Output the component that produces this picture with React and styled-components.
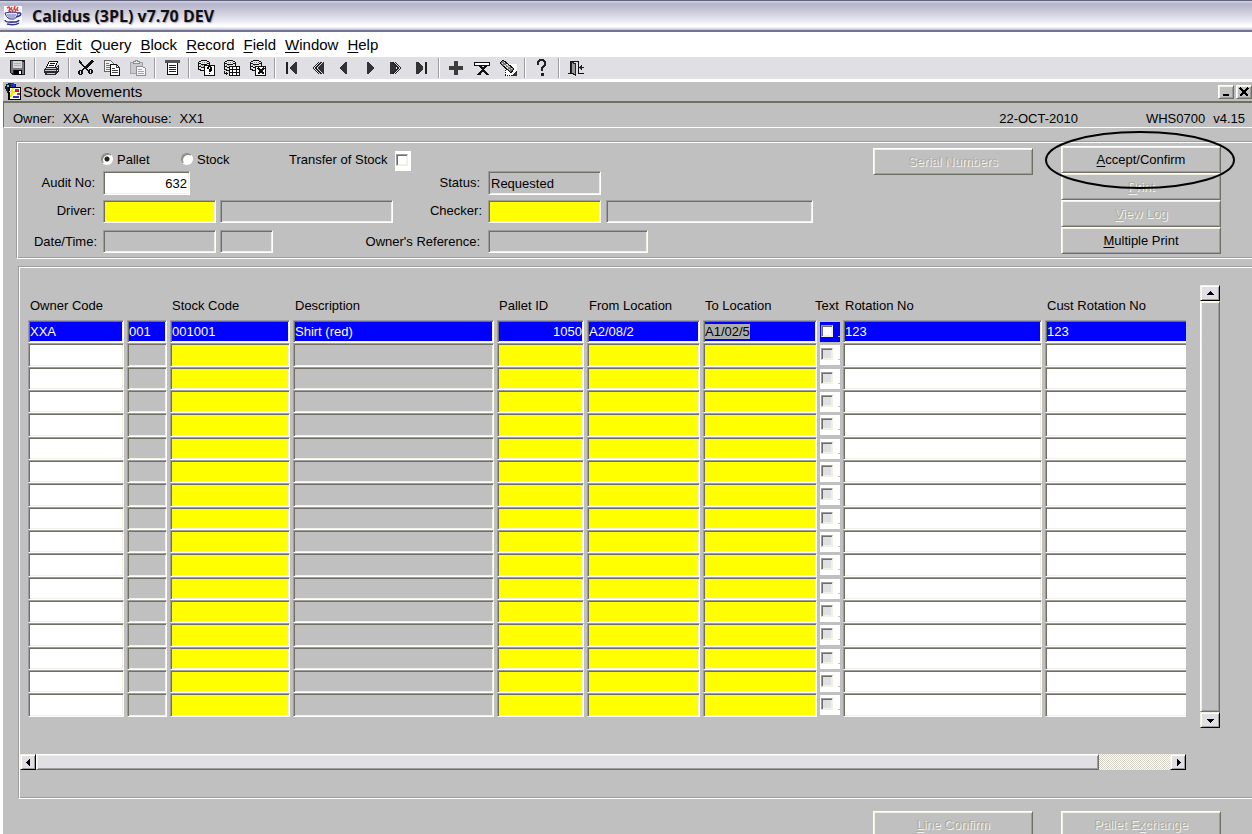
import React, { useEffect, useRef } from 'react';
import styled, { createGlobalStyle, css } from 'styled-components';

const GlobalStyle = createGlobalStyle`
  * {
    box-sizing: border-box;
  }
  body {
    margin: 0;
    background: #fff;
    color: #000;
    font-family: 'Liberation Sans', Arial, sans-serif;
    font-size: 13px;
    line-height: 16px;
  }
  button, input {
    font: inherit;
    color: inherit;
    margin: 0;
    border-radius: 0;
  }
`;

const raised = css`
  border: 1px solid;
  border-color: #fff #6f6f63 #6f6f63 #fff;
  box-shadow: inset 1px 1px #f1f0e3, inset -1px -1px #9d9da1;
`;

const sunken = css`
  border: 1px solid;
  border-color: #9d9da1 #fff #fff #9d9da1;
  box-shadow: inset 1px 1px #6f6f63, inset -1px -1px #f1f0e3;
`;

const App = styled.div`
  height: 100vh;
  overflow: hidden;
  display: flex;
  flex-direction: column;
`;

const TitleBar = styled.header`
  height: 32px;
  flex: none;
  display: flex;
  align-items: center;
  gap: 10px;
  padding: 0 4px;
  border-top: 1px solid #62627c;
  border-bottom: 2px solid #73738f;
  background: linear-gradient(
    #d5d5e4 0,
    #b4b4ca 3px,
    #c6c6d7 9px,
    #e9e9f1 20px,
    #fcfcff 24px,
    #ffffff 26px,
    #cfcfdf 28px,
    #c0c0d3 29px
  );

  h1 {
    margin: 0;
    font: 700 16px/20px 'Open Sans', 'Noto Sans', sans-serif;
    color: #101010;
    text-shadow: 1px 1px 1px #a9a9bd;
  }
`;

const MenuBar = styled.nav`
  height: 25px;
  flex: none;
  display: flex;
  align-items: center;
  gap: 9px;
  padding: 1px 5px 0;
  font-size: 15px;
  line-height: 20px;

  a {
    color: inherit;
    text-decoration: none;
  }
`;

const ToolBar = styled.div`
  height: 22px;
  flex: none;
  display: flex;
  align-items: center;
  padding-left: 5px;
  background: #e0dfe3;
`;

const ToolButton = styled.button`
  width: 26px;
  height: 22px;
  padding: 0;
  border: 0;
  background: none;
  display: grid;
  place-items: center;
`;

const Separator = styled.span`
  width: 2px;
  height: 20px;
  margin: 0 3px;
  background: linear-gradient(90deg, #9d9da1 50%, #fff 50%);
`;

const Frame = styled.main`
  flex: 1;
  margin: 3px 0 0 3px;
  background: #c0c0c0;
`;

const FrameTitle = styled.div`
  height: 19px;
  display: flex;
  align-items: center;
  gap: 2px;
  padding-left: 2px;

  h2 {
    margin: 0;
    flex: 1;
    font-size: 15px;
    font-weight: 400;
    line-height: 19px;
  }
`;

const FrameButton = styled.button`
  ${raised}
  width: 16px;
  height: 14px;
  padding: 0;
  background: #c0c0c0;
  display: grid;
  place-items: center;
`;

const InfoBar = styled.div`
  height: 27px;
  display: flex;
  align-items: center;
  gap: 8px;
  padding: 7px 7px 0 9px;
  border: solid;
  border-width: 2px 0 1px 1px;
  border-color: #6f6f63 #fff #fffff0 #6f6f63;

  .warehouse {
    margin-left: 5px;
  }
  .date {
    margin-left: auto;
    margin-right: 60px;
  }
`;

const Panel = styled.section`
  margin-left: ${(props) => props.$left}px;
  border: 1px solid #9d9da1;
  border-right: 0;
  border-bottom-color: #fff;
  box-shadow: inset 1px 1px #fff, inset 0 -1px #9d9da1;
  display: flex;
  align-items: flex-start;
`;

const HeaderPanel = styled(Panel)`
  margin-top: 13px;
  padding: 9px 31px 2px 1px;
`;

const FormRows = styled.div`
  width: 795px;
  flex: none;
  display: grid;
  grid-template-rows: 20px 24px 32px 29px;
`;

const FormRow = styled.div`
  display: flex;
  align-items: center;
  justify-content: space-between;
`;

const OptionRow = styled.div`
  display: flex;
  align-items: flex-start;
  padding-left: 83px;

  label {
    line-height: 18px;
  }
  .radio {
    width: 80px;
    display: flex;
    gap: 4px;
  }
  .transfer {
    margin: 0 7px 0 28px;
  }
`;

const FieldGroup = styled.div`
  display: flex;
  align-items: center;
  gap: 4px;

  label {
    width: ${(props) => props.$label}px;
    text-align: right;
    padding-right: ${(props) => props.$gap}px;
    margin-right: -4px;
    white-space: nowrap;
  }
`;

const FieldSlot = styled.div`
  width: 325px;
  display: flex;
  gap: 5px;
`;

const Field = styled.input`
  ${sunken}
  width: ${(props) => props.$width}px;
  height: ${(props) => (props.$tall ? 24 : 23)}px;
  padding: 0 2px;
  outline: none;
  background: ${(props) => props.$fill || '#c0c0c0'};
  text-align: ${(props) => props.$align || 'left'};
`;

const Radio = styled.input`
  appearance: none;
  width: 12px;
  height: 12px;
  margin-top: 2px;
  border: 1px solid;
  border-color: #85857c #fff #fff #85857c;
  border-radius: 50%;
  background: #fff;
  box-shadow: inset 1px 1px #85857c;

  &:checked {
    background: radial-gradient(circle, #222 2px, #fff 3px);
  }
`;

const CheckBack = styled.span`
  display: block;
  width: ${(props) => props.$width}px;
  height: 20px;
  padding: 3px 0 0 1px;
  background: ${(props) => props.$fill || '#fff'};
`;

const CellCheckBack = styled(CheckBack)`
  background: linear-gradient(#c9bfae, #c9bfae) 18px 14px / 2px 1px no-repeat
    ${(props) => props.$fill};
`;

const Check = styled.input`
  appearance: none;
  display: block;
  ${sunken}
  width: 12px;
  height: 12px;
  border-color: #9d9da1 #f1f0e3 #f1f0e3 #9d9da1;
  background: ${(props) => props.$fill || '#fff'};
`;

const Button = styled.button`
  ${raised}
  width: 160px;
  height: 27px;
  padding: 0;
  background: #c0c0c0;

  &:disabled {
    color: #aeada2;
    text-shadow: 1px 1px #f4f4ee;
  }
`;

const ButtonStack = styled.div`
  display: flex;
  flex-direction: column;
  position: relative;
  margin: -5px 0 0 28px;
`;

const SerialSlot = styled.div`
  margin: -3px 0 0 auto;
`;

const Highlight = styled.svg`
  position: absolute;
  left: -17px;
  top: -16px;
  width: 192px;
  height: 60px;
  pointer-events: none;
`;

const GridPanel = styled(Panel)`
  margin-top: 7px;
  padding: 1px 32px 1px 1px;
`;

const GridArea = styled.div`
  flex: 1;
  min-width: 0;
`;

const TableView = styled.div`
  overflow: hidden;
  padding-left: 8px;
`;

const Table = styled.table`
  table-layout: fixed;
  width: 1217px;
  border-collapse: collapse;

  th {
    height: 52px;
    padding: 0 0 6px 2px;
    vertical-align: bottom;
    text-align: left;
    font-weight: 400;
    white-space: nowrap;
  }
  .check-head {
    text-indent: -7px;
  }
  td {
    height: 23px;
    padding: 0 3px 0 0;
  }
  tbody tr:nth-child(3n + 2) td {
    height: 24px;
  }
`;

const Cell = styled.input`
  ${sunken}
  display: block;
  width: 100%;
  height: 23px;
  padding: 0 1px;
  outline: none;
  background: ${(props) => props.$fill};
  color: ${(props) => (props.$active ? '#fff' : '#000')};
  text-align: ${(props) => props.$align || 'left'};

  tr:nth-child(3n + 2) & {
    height: 24px;
  }
  &::selection {
    background: #adadad;
    color: #000;
  }
`;

const ArrowButton = styled.button`
  border: 1px solid;
  border-color: #f1f0e3 #000 #000 #f1f0e3;
  box-shadow: inset 1px 1px #fff, inset -1px -1px #9d9da1;
  width: ${(props) => props.$width}px;
  height: 16px;
  flex: none;
  padding: 0;
  background: #e0dfe3;
  display: grid;
  place-items: center;
`;

const VerticalBar = styled.div`
  width: 20px;
  height: 443px;
  flex: none;
  margin: 17px 0 0 14px;
  display: flex;
  flex-direction: column;
`;

const HorizontalBar = styled.div`
  height: 16px;
  margin: 37px 0 27px;
  display: flex;
  background: repeating-conic-gradient(#fff 0 25%, #d3d0c6 0 50%) 0 0 / 2px 2px;
`;

const Thumb = styled.div`
  ${raised}
  flex: ${(props) => props.$grow || 1};
  background: ${(props) => props.$fill};
`;

const Track = styled.div`
  flex: 71;
`;

const Footer = styled.footer`
  display: flex;
  justify-content: flex-end;
  gap: 28px;
  padding: 12px 31px 0 0;
`;

const Key = styled.span`
  text-decoration: underline;
  text-underline-offset: 2px;
`;

const Mnemonic = ({ text }) => {
  const at = text.indexOf('&');
  if (at < 0) return text;
  return (
    <>
      {text.slice(0, at)}
      <Key>{text[at + 1]}</Key>
      {text.slice(at + 2)}
    </>
  );
};

const Svg = ({ children, size = 18 }) => (
  <svg
    width={size}
    height={size}
    viewBox={`0 0 ${size} ${size}`}
    shapeRendering="crispEdges"
    fill="none"
    stroke="#111"
    aria-hidden="true"
  >
    {children}
  </svg>
);

const Cylinder = () => (
  <>
    <path d="M4 1h6v1h2v2h1v3H7v5H3v-1H1V3h1V2h2z" fill="#e6e6e6" stroke="none" />
    <path d="M4 1.500h6M2 2.500h2M10 2.500h2M1.500 3v8M12.500 3v4M2 4.500h2M10 4.500h2M4 5.500h6" />
    <path d="M2 7.500h2M4 8.500h3M2 10.500h2M3 11.500h4" />
    <path d="M5 3.500h5M6 7.500h5M3 6.500h3" stroke="#8c8c8c" strokeDasharray="1 1" />
  </>
);

const icons = {
  Save: (
    <>
      <path d="M1 1h15v15H3l-2-2z" fill="#222" stroke="none" />
      <path d="M2 2h2v12H2zM13 3h2v12h-2z" fill="#77777a" stroke="none" />
      <path d="M4 2h9v7H4z" fill="#d6d6da" stroke="none" />
      <path d="M5 4.500h7M5 6.500h7" stroke="#b2b2b6" />
      <path d="M4 9h9v2H4z" fill="#77777a" stroke="none" />
      <path d="M5 11h8v5H5z" fill="#000" stroke="none" />
      <path d="M10 12h2v3h-2z" fill="#fff" stroke="none" />
    </>
  ),
  Print: (
    <>
      <path d="M6 2h9v1h-1v2h-1v3H4V6h1V4h1z" fill="#fff" stroke="none" />
      <path d="M6 2.500h9M14.500 3v1M13.500 4v2M12.500 6v2M5.500 3v2M4.500 5v2M3.500 7v1" />
      <path d="M7 4.500h5M6 6.500h5" />
      <path d="M3 8h10l2-2h1v6l-3 3v1H2v-2H1v-4z" fill="#2a2a2a" stroke="none" />
      <path d="M3 9.500h10M2 11.500h11M4 14.500h8" stroke="#c8c8cc" />
      <path d="M14 8h1v1h-1zM14 11h1v1h-1z" fill="#ddd" stroke="none" />
    </>
  ),
  Cut: (
    <>
      <path d="M2 3l10 9M2 2l3 2M15 2L5 11M16 2l-8 8" strokeWidth="1.500" />
      <path d="M2 11h3v1h1v3H5v1H2v-1H1v-3h1z" fill="#111" stroke="none" />
      <path d="M12 10h3v1h1v3h-1v1h-3v-1h-1v-3h1z" fill="#111" stroke="none" />
      <path d="M3 12h1v3H3zM13 11h1v3h-1z" fill="#e0dfe3" stroke="none" />
    </>
  ),
  Copy: (
    <>
      <path d="M1.500 1.500h6l3 3v8h-9z" fill="#f4f4f4" stroke="#666" />
      <path d="M3 4.500h3M3 6.500h5M3 8.500h5M3 10.500h4" stroke="#777" />
      <path d="M7.500 5.500h6l3 3v8h-9z" fill="#fff" />
      <path d="M13.500 5.500v3h3M9 9.500h3M9 11.500h6M9 13.500h6" stroke="#444" />
    </>
  ),
  Paste: (
    <>
      <path d="M1.500 3.500h12v11h-12z" fill="#cacace" stroke="#a4a4a8" />
      <path d="M4.500 4.500v-2h2v-1h2v1h2v2z" fill="#eee" stroke="#8e8e92" />
      <path d="M7.500 7.500h6l3 2v7h-9z" fill="#f8f8f8" stroke="#8e8e92" />
      <path d="M9 10.500h4M9 12.500h6M9 14.500h6" stroke="#a4a4a8" />
    </>
  ),
  List: (
    <>
      <path d="M2 1h15v3H2z" fill="#555" stroke="none" />
      <path d="M4.500 4v11.500h10V4" fill="#fff" />
      <path d="M6 6.500h7M6 8.500h7M6 10.500h7M6 12.500h7" stroke="#222" />
    </>
  ),
  'Enter Query': (
    <>
      <Cylinder />
      <path d="M7.500 6.500h10v10h-10z" fill="#fff" />
      <path d="M10 9V8h1v1zM11 7.500h3M14 8v3h-1v1h-1v1M12 14v1" stroke="#000" />
      <path d="M10 8h1v2h-1zM13 8h2v2h-2zM12 10h2v1h-2zM12 11h1v2h-1zM12 14h1v1h-1z" fill="#000" stroke="none" />
    </>
  ),
  'Execute Query': (
    <>
      <Cylinder />
      <path d="M6.500 7.500h10v9h-10z" fill="#fff" />
      <path d="M6 10.500h11M6 13.500h11M9.500 7v10M13.500 7v10" />
      <path d="M1.500 12v2.500h3M3.500 13v3" />
    </>
  ),
  'Cancel Query': (
    <>
      <Cylinder />
      <path d="M6.500 7.500h10v9h-10z" fill="#fff" />
      <path d="M9 9l6 6M15 9l-6 6" strokeWidth="2" />
    </>
  ),
  First: (
    <>
      <path d="M3 3h2v12H3z" fill="#222" stroke="none" />
      <path d="M14 3v12h-2l-5-5V8l5-5z" fill="#333" stroke="none" />
    </>
  ),
  'Previous Set': (
    <>
      <path d="M15 3v12h-1L9 10V8l5-5z" fill="#333" stroke="none" />
      <path d="M10 3L4 9l6 6M12.500 3l-6 6 6 6" stroke="#222" />
    </>
  ),
  Previous: <path d="M12 3v12h-1l-6-5V8l6-5z" fill="#333" stroke="none" />,
  Next: <path d="M6 3v12h1l6-5V8L7 3z" fill="#333" stroke="none" />,
  'Next Set': (
    <>
      <path d="M3 3v12h1l5-5V8L4 3z" fill="#333" stroke="none" />
      <path d="M8 3l6 6-6 6M5.500 3l6 6-6 6" stroke="#222" />
    </>
  ),
  Last: (
    <>
      <path d="M3 3v12h2l5-5V8L5 3z" fill="#333" stroke="none" />
      <path d="M12 3h2v12h-2z" fill="#222" stroke="none" />
    </>
  ),
  Insert: <path d="M7 2h4v5h5v4h-5v5H7v-5H2V7h5z" fill="#3c3c3c" stroke="none" />,
  Remove: (
    <>
      <path d="M1.500 3.500h15v3h-15z" fill="#fff" />
      <path d="M6 6l8 9M14 6l-8 9" strokeWidth="2" />
      <path d="M4 15.500h4M13 15.500h3" />
    </>
  ),
  Clear: (
    <>
      <path d="M6 5h12v12H6z" fill="#fff" stroke="none" />
      <path d="M6.500 9v8M6 16.500h11" strokeDasharray="1 1" />
      <path d="M12 17h6v-6z" fill="#333" stroke="none" />
      <path d="M1 4l3-3 11 9-3 4z" fill="#777" stroke="#111" />
      <path d="M3 4l9 8M5 3l8 7" stroke="#ddd" strokeDasharray="2 1" />
    </>
  ),
  Help: (
    <>
      <path d="M5 6V3l2-2h3l2 2v3L9 9v3" strokeWidth="2" stroke="#222" />
      <path d="M8 14h3v3H8z" fill="#222" stroke="none" />
    </>
  ),
  Exit: (
    <>
      <path d="M3.500 15V2.500h8V15M1 14.500h3M11 14.500h6" />
      <path d="M4.500 3l4 2v11l-4-2z" fill="#999" stroke="#222" />
      <path d="M12 8.500h5M14.500 6v5M13.500 7v3" stroke="#222" />
    </>
  ),
};

const toolGroups = [
  ['Save'],
  ['Print'],
  ['Cut', 'Copy', 'Paste'],
  ['List'],
  ['Enter Query', 'Execute Query', 'Cancel Query'],
  ['First', 'Previous Set', 'Previous', 'Next', 'Next Set', 'Last'],
  ['Insert', 'Remove', 'Clear'],
  ['Help'],
  ['Exit'],
];

const arrows = {
  up: 'M4 2h1v1h1v1h1v1h1v1H1V5h1V4h1V3h1z',
  down: 'M1 3h7v1H7v1H6v1H5v1H4V6H3V5H2V4H1z',
  left: 'M6 1v7H5V7H4V6H3V5H2V4h1V3h1V2h1V1z',
  right: 'M3 1v7h1V7h1V6h1V5h1V4H6V3H5V2H4V1z',
};

const Arrow = ({ direction, width }) => (
  <ArrowButton type="button" aria-label={`Scroll ${direction}`} $width={width}>
    <Svg size={9}>
      <path d={arrows[direction]} fill="#000" stroke="none" />
    </Svg>
  </ArrowButton>
);

const CupIcon = () => (
  <svg width="18" height="22" viewBox="0 0 18 22" fill="none" aria-hidden="true">
    <path d="M0 1h18v19H0z" fill="#f6f6fc" />
    <path
      d="M3 3l2-1 1 2-1 2 2 1M8 2l-1 2 2 2-1 1M11 1l-1 3 2 1-1 2M14 2l-1 2 1 2"
      stroke="#e8403c"
      strokeWidth="1.500"
    />
    <path d="M1 8c3-1 11-1 13 0-1 4-2 5-4 6H6c-3-1-4-3-5-6z" fill="#e8e8f8" stroke="#34348a" />
    <path d="M3 10h9M4 12h7" stroke="#6a6ab4" />
    <path d="M14 8c4-1 4 3-2 4M1 15c0 3 13 3 14 0M5 17h8M3 19c4 1 9 1 12-1" stroke="#34348a" strokeWidth="1.500" />
  </svg>
);

const FormIcon = () => (
  <svg width="16" height="17" viewBox="0 0 16 17" shapeRendering="crispEdges" aria-hidden="true">
    <path d="M3 0h6v1h2v3H5v6H2V8H1V6H0V3h1V1h2z" fill="#123" />
    <path d="M6 0h3v1h1v3H6z" fill="#2030c8" />
    <path d="M2 2h2v2H2zM3 5h1v3H3z" fill="#6fd0b0" />
    <path d="M3 4h13v13H3z" fill="#000" />
    <path d="M5 5h10v11H5z" fill="#fff" />
    <path d="M7 5h2v1H8v2h2v2H8v2H7v2H5v-3h1V9H4V8h2V6h1z" fill="#f6e500" />
    <path d="M10 6h4v2h-4zM12 10h3v2h-3z" fill="#e02020" />
    <path d="M10 8h4v1h-4zM8 13h6v2H8z" fill="#2038d0" />
  </svg>
);

const menus = ['&Action', '&Edit', '&Query', '&Block', '&Record', '&Field', '&Window', '&Help'];

const YELLOW = '#ffff00';
const GREY = '#c0c0c0';
const WHITE = '#ffffff';
const BLUE = '#0000ff';

const columns = [
  { key: 'owner', title: 'Owner Code', width: 99, fill: WHITE },
  { key: 'line', title: '', width: 43, fill: GREY },
  { key: 'stock', title: 'Stock Code', width: 123, fill: YELLOW },
  { key: 'description', title: 'Description', width: 204, fill: GREY },
  { key: 'pallet', title: 'Pallet ID', width: 90, fill: YELLOW, align: 'right' },
  { key: 'from', title: 'From Location', width: 116, fill: YELLOW },
  { key: 'to', title: 'To Location', width: 117, fill: YELLOW },
  { key: 'text', title: 'Text', width: 23, check: true },
  { key: 'rotation', title: 'Rotation No', width: 202, fill: WHITE },
  { key: 'custRotation', title: 'Cust Rotation No', width: 200, fill: WHITE },
];

const rows = [
  {
    owner: 'XXA',
    line: '001',
    stock: '001001',
    description: 'Shirt (red)',
    pallet: '1050',
    from: 'A2/08/2',
    to: 'A1/02/5',
    rotation: '123',
    custRotation: '123',
  },
  ...Array.from({ length: 16 }, () => ({})),
];

const StockTable = () => {
  const current = useRef(null);

  useEffect(() => {
    current.current.focus();
    current.current.select();
  }, []);

  return (
    <Table>
      <colgroup>
        {columns.map((column) => (
          <col key={column.key} width={column.width} />
        ))}
      </colgroup>
      <thead>
        <tr>
          {columns.map((column) => (
            <th key={column.key} scope="col" className={column.check ? 'check-head' : undefined}>
              {column.title}
            </th>
          ))}
        </tr>
      </thead>
      <tbody>
        {rows.map((row, index) => {
          const active = index === 0;
          return (
            <tr key={index}>
              {columns.map((column) => (
                <td key={column.key}>
                  {column.check ? (
                    <CellCheckBack $width={20} $fill={active ? BLUE : WHITE}>
                      <Check
                        type="checkbox"
                        aria-label={`Text ${index + 1}`}
                        $fill={active ? WHITE : '#e0dfe3'}
                      />
                    </CellCheckBack>
                  ) : (
                    <Cell
                      ref={active && column.key === 'to' ? current : undefined}
                      aria-label={`${column.title || 'Line'} ${index + 1}`}
                      defaultValue={row[column.key] || ''}
                      $active={active}
                      $fill={active ? BLUE : column.fill}
                      $align={column.align}
                    />
                  )}
                </td>
              ))}
            </tr>
          );
        })}
      </tbody>
    </Table>
  );
};

const StockMovements = () => (
  <App>
    <GlobalStyle />
    <TitleBar>
      <CupIcon />
      <h1>Calidus (3PL) v7.70 DEV</h1>
    </TitleBar>
    <MenuBar>
      {menus.map((menu) => (
        <a href="#menu" key={menu}>
          <Mnemonic text={menu} />
        </a>
      ))}
    </MenuBar>
    <ToolBar>
      {toolGroups.map((group, index) => (
        <React.Fragment key={group[0]}>
          {index > 0 && <Separator />}
          {group.map((name) => (
            <ToolButton type="button" key={name} aria-label={name}>
              <Svg>{icons[name]}</Svg>
            </ToolButton>
          ))}
        </React.Fragment>
      ))}
    </ToolBar>
    <Frame>
      <FrameTitle>
        <FormIcon />
        <h2>Stock Movements</h2>
        <FrameButton type="button" aria-label="Minimise">
          <Svg size={10}>
            <path d="M2 7h6v2H2z" fill="#000" stroke="none" />
          </Svg>
        </FrameButton>
        <FrameButton type="button" aria-label="Close">
          <Svg size={10}>
            <path d="M1 1l8 8M9 1l-8 8" stroke="#000" strokeWidth="1.500" />
          </Svg>
        </FrameButton>
      </FrameTitle>
      <InfoBar>
        <span>Owner:</span>
        <span>XXA</span>
        <span className="warehouse">Warehouse:</span>
        <span>XX1</span>
        <span className="date">22-OCT-2010</span>
        <span>WHS0700</span>
        <span>v4.15</span>
      </InfoBar>

      <HeaderPanel $left={13}>
        <FormRows>
          <OptionRow>
            <label className="radio">
              <Radio type="radio" name="kind" defaultChecked />
              Pallet
            </label>
            <label className="radio">
              <Radio type="radio" name="kind" />
              Stock
            </label>
            <label className="transfer" htmlFor="transfer">
              Transfer of Stock
            </label>
            <CheckBack $width={16}>
              <Check type="checkbox" id="transfer" />
            </CheckBack>
          </OptionRow>
          <FormRow>
            <FieldGroup $label={85} $gap={8}>
              <label htmlFor="audit">Audit No:</label>
              <Field id="audit" $width={87} $tall $fill={WHITE} $align="right" defaultValue="632" />
            </FieldGroup>
            <FieldGroup $gap={8}>
              <label htmlFor="status">Status:</label>
              <FieldSlot>
                <Field id="status" $width={113} $tall defaultValue="Requested" />
              </FieldSlot>
            </FieldGroup>
          </FormRow>
          <FormRow>
            <FieldGroup $label={85} $gap={8}>
              <label htmlFor="driver">Driver:</label>
              <Field id="driver" $width={113} $fill={YELLOW} />
              <Field aria-label="Driver name" $width={173} />
            </FieldGroup>
            <FieldGroup $gap={6}>
              <label htmlFor="checker">Checker:</label>
              <FieldSlot>
                <Field id="checker" $width={113} $fill={YELLOW} />
                <Field aria-label="Checker name" $width={207} />
              </FieldSlot>
            </FieldGroup>
          </FormRow>
          <FormRow>
            <FieldGroup $label={85} $gap={6}>
              <label htmlFor="date">Date/Time:</label>
              <Field id="date" $width={113} />
              <Field aria-label="Time" $width={53} />
            </FieldGroup>
            <FieldGroup $gap={8}>
              <label htmlFor="reference">Owner&apos;s Reference:</label>
              <FieldSlot>
                <Field id="reference" $width={160} />
              </FieldSlot>
            </FieldGroup>
          </FormRow>
        </FormRows>
        <SerialSlot>
          <Button type="button" disabled>
            Serial Numbers
          </Button>
        </SerialSlot>
        <ButtonStack>
          <Button type="button">
            <Mnemonic text="&Accept/Confirm" />
          </Button>
          <Button type="button" disabled>
            <Mnemonic text="&Print" />
          </Button>
          <Button type="button" disabled>
            <Mnemonic text="&View Log" />
          </Button>
          <Button type="button">
            <Mnemonic text="&Multiple Print" />
          </Button>
          <Highlight viewBox="0 0 192 60" aria-hidden="true">
            <ellipse cx="96" cy="30" rx="94" ry="28" fill="none" stroke="#000" strokeWidth="2" />
          </Highlight>
        </ButtonStack>
      </HeaderPanel>

      <GridPanel $left={15}>
        <GridArea>
          <TableView>
            <StockTable />
          </TableView>
          <HorizontalBar>
            <Arrow direction="left" width={16} />
            <Thumb $grow={1063} $fill="#e0dfe3" />
            <Track />
            <Arrow direction="right" width={16} />
          </HorizontalBar>
        </GridArea>
        <VerticalBar>
          <Arrow direction="up" width={20} />
          <Thumb $fill="#c0c0c0" />
          <Arrow direction="down" width={20} />
        </VerticalBar>
      </GridPanel>

      <Footer>
        <Button type="button" disabled>
          <Mnemonic text="&Line Confirm" />
        </Button>
        <Button type="button" disabled>
          <Mnemonic text="Pallet E&xchange" />
        </Button>
      </Footer>
    </Frame>
  </App>
);

export default StockMovements;
